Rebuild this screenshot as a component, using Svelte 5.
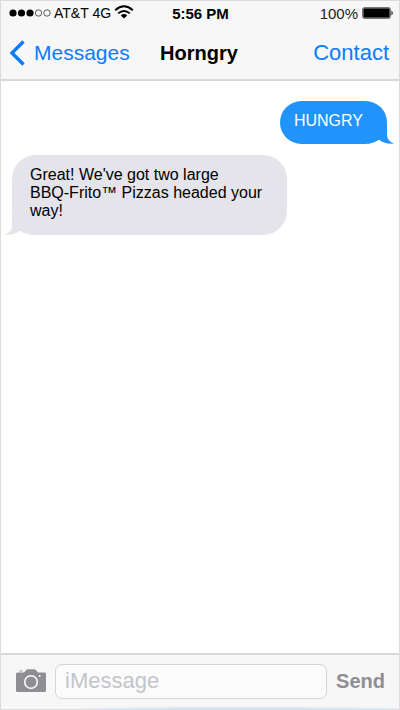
<script>
  const contact = 'Horngry';
  const messages = [
    { from: 'me', text: 'HUNGRY' },
    { from: 'them', text: "Great! We've got two large BBQ-Frito™ Pizzas headed your way!" }
  ];
  const signal = [true, true, true, false, false];
  let draft = $state('');
</script>

<div class="phone">
  <header>
    <div class="status">
      <div class="carrier">
        <svg class="dots" width="42" height="8" viewBox="0 0 42 8" aria-hidden="true">
          {#each signal as on, i}
            <circle cx={4 + i * 8.5} cy="4" r={on ? 3.6 : 3.2} fill={on ? '#000' : 'none'} stroke={on ? 'none' : '#333'} stroke-width="0.8" />
          {/each}
        </svg>
        <span>AT&amp;T 4G</span>
        <svg class="wifi" width="20" height="14" viewBox="0 0 20 14" aria-hidden="true">
          <g fill="none" stroke="#000" stroke-width="1.9">
            <path d="M1.2 5.2Q10 -2.6 18.8 5.2" />
            <path d="M4.2 8.4Q10 3.4 15.8 8.4" />
          </g>
          <path d="M6.8 10.4Q10 7.8 13.2 10.4L10 13.4Z" />
        </svg>
      </div>
      <time>5:56 PM</time>
      <div class="power">
        <span>100%</span>
        <svg width="32" height="12" viewBox="0 0 32 12" aria-hidden="true">
          <rect x="0.5" y="0.5" width="28" height="11" rx="2" fill="#999" stroke="#777" />
          <rect x="1.5" y="1.5" width="26" height="9" rx="1" />
          <path d="M29.5 3.5Q32 6 29.5 8.5Z" />
        </svg>
      </div>
    </div>
    <nav>
      <a class="back" href="#messages">
        <svg width="18" height="26" viewBox="0 0 18 26" aria-hidden="true">
          <path d="M14.5 1.5L3 13L14.5 24.5" fill="none" stroke="#0a7cff" stroke-width="3.4" />
        </svg>
        <span>Messages</span>
      </a>
      <h1>{contact}</h1>
      <a class="contact" href="#contact">Contact</a>
    </nav>
  </header>

  <main>
    {#each messages as message}
      <div class="bubble {message.from}">
        {#each message.text.split(' ') as word}<span class="word">{word}</span>{' '}{/each}
        <svg class="tail" width="26" height="20" viewBox="0 0 26 20" aria-hidden="true">
          <path d="M19 0V11Q19.5 17.5 26 19.6Q17 20.4 11 15.7Q6 19 0 19.8V0Z" fill="currentColor" />
        </svg>
      </div>
    {/each}
  </main>

  <footer>
    <button class="camera" aria-label="Attach photo">
      <svg width="32" height="24" viewBox="0 0 32 24" aria-hidden="true">
        <path fill="#8e8e93" d="M2.5 3.5H9L11.2 1Q11.8 .3 12.8 .3H19.2Q20.2 .3 20.8 1L23 3.5H29.5Q31 3.5 31 5V21.5Q31 23 29.5 23H2.5Q1 23 1 21.5V5Q1 3.5 2.5 3.5ZM4.5 1.4H7.5V2.6H4.5Z" />
        <circle cx="16" cy="13" r="6.3" fill="none" stroke="#fff" stroke-width="1.5" />
        <circle cx="24.6" cy="7" r="1" fill="#fff" />
      </svg>
    </button>
    <input type="text" placeholder="iMessage" aria-label="iMessage" bind:value={draft} />
    <button class="send">Send</button>
  </footer>
</div>

<style>
  .phone {
    box-sizing: border-box;
    min-height: 100vh;
    display: flex;
    flex-direction: column;
    border: 1px solid #dcdcdc;
    background: #fff;
    font-family: "Liberation Sans", Arial, sans-serif;
    color: #000;
  }
  header {
    background: #f7f7f7;
    border-bottom: 2px solid #d8d8d8;
  }
  .status {
    display: grid;
    grid-template-columns: 1fr auto 1fr;
    align-items: center;
    height: 24px;
    padding: 0 7px 0 8px;
    font-size: 14px;
  }
  .carrier, .power {
    display: flex;
    align-items: center;
    gap: 3px;
  }
  .wifi {
    margin-bottom: 3px;
  }
  .power {
    justify-content: flex-end;
    gap: 4px;
    margin-right: -2px;
    font-size: 15px;
    color: #222;
  }
  time {
    font-size: 15px;
    font-weight: bold;
  }
  nav {
    display: grid;
    grid-template-columns: 1fr auto 1fr;
    align-items: center;
    height: 54px;
    padding: 2px 10px 0 8px;
    box-sizing: border-box;
  }
  a {
    color: #0a7cff;
    font-size: 22px;
    text-decoration: none;
  }
  .back {
    display: flex;
    align-items: center;
    gap: 7px;
    font-size: 21px;
  }
  .contact {
    justify-self: end;
  }
  h1 {
    margin: 0;
    font-size: 20px;
  }
  main {
    flex: 1;
    display: flex;
    flex-direction: column;
    align-items: flex-start;
    gap: 11px;
    padding: 20px 12px 20px 11px;
  }
  .bubble {
    position: relative;
    box-sizing: border-box;
    max-width: 275px;
    padding: 11px 24px 15px 18px;
    border-radius: 24px;
    font-size: 16px;
    line-height: 18px;
  }
  .word {
    white-space: nowrap;
  }
  .me {
    align-self: flex-end;
    padding: 11px 24px 14px 14px;
    background: #2094fa;
    color: #fff;
  }
  .them {
    background: #e5e4ea;
  }
  .tail {
    position: absolute;
    right: -7px;
    bottom: 0;
    color: #2094fa;
  }
  .them .tail {
    right: auto;
    left: -7px;
    transform: scaleX(-1);
    color: #e5e4ea;
  }
  footer {
    display: flex;
    align-items: center;
    height: 52px;
    padding: 0 14px 2px;
    border-top: 2px solid #d8d8d8;
    background: linear-gradient(90deg, #f7f7f8 15%, #d9e8f8 45%, #d9e8f8 75%, #eef3f9) bottom / 100% 2px no-repeat #f7f7f8;
  }
  button {
    padding: 0;
    border: 0;
    background: none;
    font: inherit;
  }
  .camera {
    display: flex;
  }
  input {
    flex: 1;
    min-width: 0;
    box-sizing: border-box;
    height: 35px;
    margin: 0 9px 0 8px;
    padding: 0 9px;
    border: 1px solid #d4d4d8;
    border-radius: 7px;
    background: #fbfbfb;
    font: inherit;
    font-size: 22px;
  }
  input::placeholder {
    color: #c4c4ca;
    opacity: 1;
  }
  .send {
    color: #8e8e93;
    font-size: 20px;
    font-weight: bold;
  }
</style>
